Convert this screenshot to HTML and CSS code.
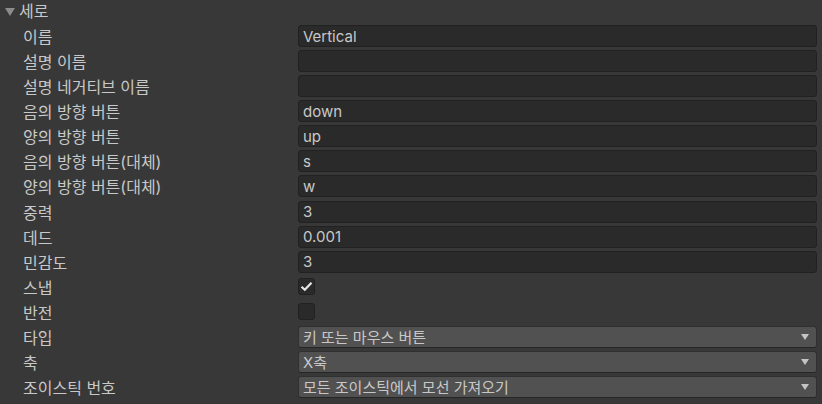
FILE: index.html
```html
<!DOCTYPE html>
<html lang="ko">
<head>
<meta charset="utf-8">
<link rel="stylesheet" href="styles.css">
</head>
<body>
<div class="inspector">
  <div class="header">
    <span class="fold"></span>
    <span class="title">세로</span>
  </div>
  <div class="row"><span class="label">이름</span><div class="field text">Vertical</div></div>
  <div class="row"><span class="label">설명 이름</span><div class="field text"></div></div>
  <div class="row"><span class="label">설명 네거티브 이름</span><div class="field text"></div></div>
  <div class="row"><span class="label">음의 방향 버튼</span><div class="field text">down</div></div>
  <div class="row"><span class="label">양의 방향 버튼</span><div class="field text">up</div></div>
  <div class="row"><span class="label">음의 방향 버튼(대체)</span><div class="field text">s</div></div>
  <div class="row"><span class="label">양의 방향 버튼(대체)</span><div class="field text">w</div></div>
  <div class="row"><span class="label">중력</span><div class="field text">3</div></div>
  <div class="row"><span class="label">데드</span><div class="field text">0.001</div></div>
  <div class="row"><span class="label">민감도</span><div class="field text">3</div></div>
  <div class="row"><span class="label">스냅</span><div class="check"><svg width="13" height="11" viewBox="0 0 13 11"><path d="M1.5 5.8 L4.8 8.8 L11.5 1.8" fill="none" stroke="#e6e6e6" stroke-width="2.2"/></svg></div></div>
  <div class="row"><span class="label">반전</span><div class="check"></div></div>
  <div class="row"><span class="label">타입</span><div class="field drop"><span>키 또는 마우스 버튼</span><span class="arrow"></span></div></div>
  <div class="row"><span class="label">축</span><div class="field drop"><span>X축</span><span class="arrow"></span></div></div>
  <div class="row"><span class="label">조이스틱 번호</span><div class="field drop"><span>모든 조이스틱에서 모선 가져오기</span><span class="arrow"></span></div></div>
</div>
</body>
</html>
```

FILE: styles.css
```css
* { box-sizing: border-box; }
html, body {
  margin: 0;
  padding: 0;
  background: #383838;
}
body {
  width: 822px;
  height: 404px;
  overflow: hidden;
  font-family: "Inter", "Noto Sans CJK KR", sans-serif;
  font-size: 15px;
  color: #c8c8c8;
}
.inspector {
  display: flex;
  flex-direction: column;
  padding-right: 5px;
}
.header {
  height: 22px;
  display: flex;
  align-items: center;
  padding-left: 5px;
}
.fold {
  width: 0;
  height: 0;
  border-left: 5px solid transparent;
  border-right: 5px solid transparent;
  border-top: 8px solid #8c8c8c;
  margin-right: 4px;
  margin-top: 1px;
}
.title {
  line-height: 22px;
  font-size: 16px;
}
.row {
  display: flex;
  align-items: center;
  height: 22px;
  margin-top: 3.07px;
}
.label {
  width: 298px;
  flex: none;
  padding-left: 23px;
  white-space: nowrap;
  font-size: 16px;
}
.field {
  flex: 1;
  height: 22px;
  border-radius: 3px;
  display: flex;
  align-items: center;
  padding-left: 4px;
  white-space: nowrap;
}
.text {
  background: #2a2a2a;
  border: 1px solid #212121;
}
.drop {
  background: #515151;
  border: 1px solid #303030;
  border-bottom-color: #262626;
  justify-content: space-between;
  padding-right: 7px;
}
.arrow {
  width: 0;
  height: 0;
  border-left: 4.5px solid transparent;
  border-right: 4.5px solid transparent;
  border-top: 6px solid #c4c4c4;
}
.check {
  width: 17px;
  height: 17px;
  background: #2a2a2a;
  border: 1px solid #212121;
  border-radius: 3px;
  display: flex;
  align-items: center;
  justify-content: center;
}
```
